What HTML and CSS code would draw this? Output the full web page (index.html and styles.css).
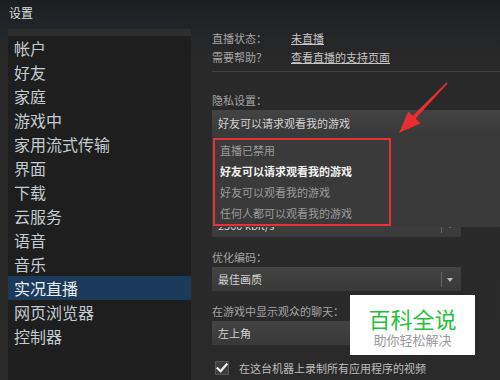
FILE: index.html
```html
<!DOCTYPE html>
<html lang="zh-CN">
<head>
<meta charset="utf-8">
<title>设置</title>
<link rel="stylesheet" href="styles.css">
</head>
<body>
<div class="window">
  <div class="titlebar">设置</div>
  <div class="main-row">
    <nav class="sidebar">
      <div class="side-top"></div>
      <ul class="menu">
        <li>帐户</li>
        <li>好友</li>
        <li>家庭</li>
        <li>游戏中</li>
        <li>家用流式传输</li>
        <li>界面</li>
        <li>下载</li>
        <li>云服务</li>
        <li>语音</li>
        <li>音乐</li>
        <li class="active">实况直播</li>
        <li>网页浏览器</li>
        <li>控制器</li>
      </ul>
    </nav>
    <main class="content">
      <div class="info-row"><span class="info-label">直播状态：</span><a class="link">未直播</a></div>
      <div class="info-row"><span class="info-label">需要帮助？</span><a class="link">查看直播的支持页面</a></div>
      <div class="sep"></div>

      <div class="field privacy">
        <div class="label">隐私设置：</div>
        <div class="select-wrap">
          <div class="select wide"><span>好友可以请求观看我的游戏</span></div>
          <div class="dropdown">
            <ul class="options">
              <li>直播已禁用</li>
              <li class="current">好友可以请求观看我的游戏</li>
              <li>好友可以观看我的游戏</li>
              <li>任何人都可以观看我的游戏</li>
            </ul>
          </div>
        </div>
      </div>

      <div class="field bitrate">
        <div class="select"><span>2500 kbit/s</span><i class="divider"></i><i class="caret"></i></div>
      </div>

      <div class="field">
        <div class="label">优化编码：</div>
        <div class="select"><span>最佳画质</span><i class="divider"></i><i class="caret"></i></div>
      </div>

      <div class="field">
        <div class="label">在游戏中显示观众的聊天：</div>
        <div class="select"><span>左上角</span><i class="divider"></i><i class="caret"></i></div>
      </div>

      <label class="check-row">
        <span class="checkbox">
          <svg width="12" height="12" viewBox="0 0 12 12"><path d="M1.5 6.2 L4.6 9.2 L10.6 2.4" fill="none" stroke="#f2f2f2" stroke-width="2.2" stroke-linecap="square"/></svg>
        </span>
        <span>在这台机器上录制所有应用程序的视频</span>
      </label>
    </main>
  </div>

  <div class="watermark">
    <div class="wm-title">百科全说</div>
    <div class="wm-sub">助你轻松解决</div>
  </div>

  <svg class="annot-arrow" width="500" height="380" viewBox="0 0 500 380">
    <polygon points="399,133 420.5,123.2 415.6,118.6 447.6,83.6 446.4,82.4 412.8,115.8 408.2,111.4" fill="#ec2d2f"/>
  </svg>
</div>
</body>
</html>
```

FILE: styles.css
```css
html, body {
  margin: 0;
  padding: 0;
}

body {
  width: 500px;
  height: 380px;
  overflow: hidden;
  background: #2a2a2a;
  font-family: "Noto Sans CJK SC", "Noto Sans", sans-serif;
}

.window {
  position: relative;
  width: 500px;
  height: 380px;
  overflow: hidden;
  background: linear-gradient(to bottom, #1c1e21 0, #232427 29px, #292929 60px, #2a2a2a 100%);
}

.titlebar {
  height: 29px;
  padding-left: 9px;
  line-height: 26px;
  font-size: 12px;
  color: #dcdedf;
}

.main-row {
  display: flex;
}

.sidebar {
  flex: 0 0 183px;
  margin-left: 8px;
  height: 351px;
  background: #1e1e1e;
}

.side-top {
  height: 7px;
  background: #2d2d2d;
}

.menu {
  list-style: none;
  margin: 0;
  padding: 0;
}

.menu li {
  height: 24px;
  line-height: 24px;
  padding-left: 6px;
  font-size: 16px;
  color: #c2cbd2;
  white-space: nowrap;
}

.menu li.active {
  background: #1c3a5a;
  color: #e8eef2;
}

.content {
  flex: 1;
  padding-left: 21px;
  font-size: 11px;
  color: #a4a4a4;
}

.info-row {
  display: flex;
  height: 19px;
  line-height: 19px;
}

.info-label {
  width: 79px;
}

.link {
  color: #c6c6c6;
  text-decoration: underline;
}

.sep {
  margin-top: 4px;
  height: 1px;
  background: #424242;
}

.label {
  height: 19px;
  line-height: 19px;
  white-space: nowrap;
}

.select-wrap {
  position: relative;
}

.select {
  position: relative;
  box-sizing: border-box;
  width: 249px;
  height: 24px;
  padding-left: 6px;
  display: flex;
  align-items: center;
  background: linear-gradient(to bottom, #434343, #393939);
  color: #d2d2d2;
  white-space: nowrap;
}

.select.wide {
  width: 300px;
  height: 25px;
}

.select .divider {
  position: absolute;
  left: 229px;
  top: 5px;
  bottom: 4px;
  width: 1px;
  background: #646464;
}

.select .caret {
  position: absolute;
  left: 235px;
  top: 11px;
  width: 0;
  height: 0;
  border-left: 3.5px solid transparent;
  border-right: 3.5px solid transparent;
  border-top: 4px solid #b8b8b8;
}

.dropdown {
  position: absolute;
  left: 0;
  top: 100%;
  z-index: 3;
  width: 300px;
  padding: 3px 0 1px 1px;
  background: #3a3a3a;
}

.options {
  list-style: none;
  margin: 0;
  padding: 0;
  width: 174px;
  border: 2px solid #e6333a;
}

.options li {
  height: 21px;
  line-height: 21px;
  padding-left: 5px;
  color: #9c9c9c;
  white-space: nowrap;
}

.options li.current {
  color: #f2f2f2;
  font-weight: bold;
}

.field {
  margin-top: 11px;
}

.field.privacy {
  margin-top: 19px;
}

.field.bitrate {
  margin-top: 78px;
}

.check-row {
  display: flex;
  align-items: center;
  gap: 10px;
  margin-top: 16px;
  margin-left: 3px;
  color: #bdbdbd;
  height: 14px;
  line-height: 14px;
}

.checkbox {
  box-sizing: border-box;
  width: 14px;
  height: 14px;
  display: flex;
  align-items: center;
  justify-content: center;
  background: #3e3e3e;
  border: 1px solid #565656;
}

.watermark {
  position: absolute;
  left: 350px;
  top: 295px;
  width: 125px;
  height: 60px;
  box-sizing: border-box;
  padding-top: 10px;
  background: #ffffff;
  text-align: center;
  z-index: 4;
}

.wm-title {
  height: 26px;
  line-height: 26px;
  font-size: 22px;
  color: #1fc23a;
}

.wm-sub {
  height: 18px;
  line-height: 18px;
  font-size: 13px;
  color: #9a9a9a;
}

.annot-arrow {
  position: absolute;
  left: 0;
  top: 0;
  z-index: 5;
  pointer-events: none;
}
```
